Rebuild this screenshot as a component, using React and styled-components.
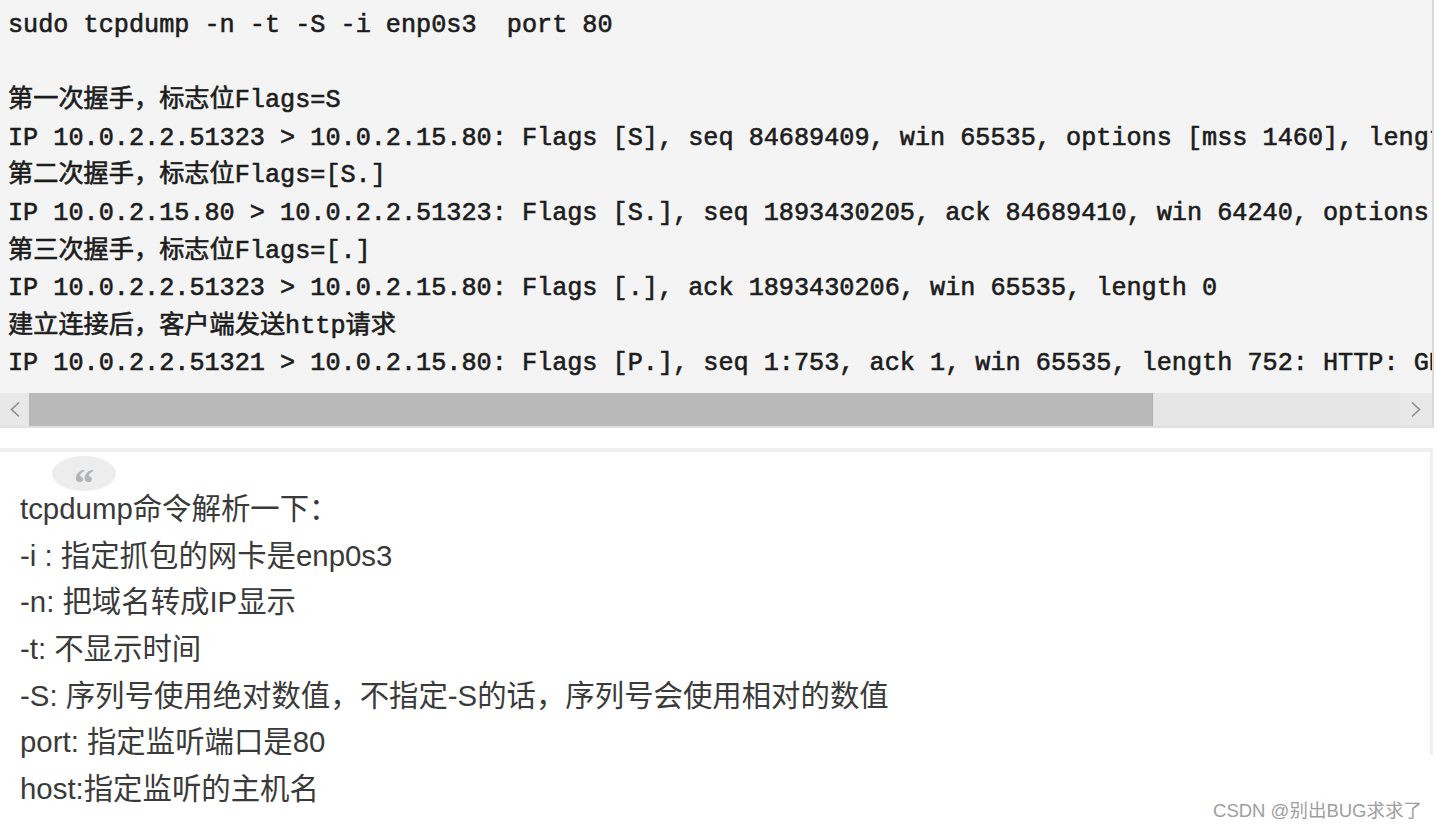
import React from "react";
import styled, { createGlobalStyle } from "styled-components";

const codeLines = [
  "sudo tcpdump -n -t -S -i enp0s3  port 80",
  "",
  "第一次握手，标志位Flags=S",
  "IP 10.0.2.2.51323 > 10.0.2.15.80: Flags [S], seq 84689409, win 65535, options [mss 1460], length 0",
  "第二次握手，标志位Flags=[S.]",
  "IP 10.0.2.15.80 > 10.0.2.2.51323: Flags [S.], seq 1893430205, ack 84689410, win 64240, options [mss 1460], length 0",
  "第三次握手，标志位Flags=[.]",
  "IP 10.0.2.2.51323 > 10.0.2.15.80: Flags [.], ack 1893430206, win 65535, length 0",
  "建立连接后，客户端发送http请求",
  "IP 10.0.2.2.51321 > 10.0.2.15.80: Flags [P.], seq 1:753, ack 1, win 65535, length 752: HTTP: GET / HTTP/1.1",
];

const notes = [
  "tcpdump命令解析一下：",
  "-i : 指定抓包的网卡是enp0s3",
  "-n: 把域名转成IP显示",
  "-t: 不显示时间",
  "-S: 序列号使用绝对数值，不指定-S的话，序列号会使用相对的数值",
  "port: 指定监听端口是80",
  "host:指定监听的主机名",
];

function Chevron({ left }) {
  return (
    <svg width="12" height="17" viewBox="0 0 12 17">
      <path
        d={left ? "M10 1.5 L2.5 8.5 L10 15.5" : "M2 1.5 L9.5 8.5 L2 15.5"}
        fill="none"
        stroke="#8c8c8c"
        strokeWidth="1.6"
      />
    </svg>
  );
}

export default function App() {
  return (
    <Page>
      <GlobalStyle />
      <CodeBlock>
        <CodeText>
          {codeLines.map((line, i) => (
            <div key={i}>{line || " "}</div>
          ))}
        </CodeText>
        <ScrollBar>
          <ScrollButton>
            <Chevron left />
          </ScrollButton>
          <ScrollThumb />
          <ScrollTrack />
          <ScrollButton $wide>
            <Chevron />
          </ScrollButton>
        </ScrollBar>
      </CodeBlock>

      <Quote>
        <QuoteBubble>
          <QuoteMark>“</QuoteMark>
        </QuoteBubble>
        {notes.map((n) => (
          <QuoteLine key={n}>{n}</QuoteLine>
        ))}
      </Quote>

      <Watermark>CSDN @别出BUG求求了</Watermark>
    </Page>
  );
}

const GlobalStyle = createGlobalStyle`
  body {
    margin: 0;
    background: #ffffff;
  }
`;

const Page = styled.div`
  position: relative;
  width: 1437px;
  height: 830px;
  overflow: hidden;
  background: #ffffff;
`;

const CodeBlock = styled.div`
  width: 1432px;
  background: #f4f4f4;
  border-right: 2px solid #dadada;
  border-bottom: 2px solid #e0e0e0;
`;

const CodeText = styled.pre`
  margin: 0;
  padding: 7px 0 10px 8px;
  overflow: hidden;
  white-space: pre;
  font-family: "Liberation Mono", "Noto Sans CJK SC", monospace;
  font-weight: 400;
  font-size: 25.2px;
  line-height: 37.6px;
  color: #1c1c1c;
  -webkit-text-stroke: 0.6px #1c1c1c;
`;

const ScrollBar = styled.div`
  display: flex;
  height: 33px;
  background: #e6e6e6;
`;

const ScrollButton = styled.div`
  width: ${(p) => (p.$wide ? "32px" : "29px")};
  display: flex;
  align-items: center;
  justify-content: center;
  background: #e8e8e8;
`;

const ScrollThumb = styled.div`
  width: 1124px;
  background: #b9b9b9;
  border-right: 1px solid #aeaeae;
  box-sizing: border-box;
`;

const ScrollTrack = styled.div`
  flex: 1;
  background: #e6e6e6;
`;

const Quote = styled.div`
  position: relative;
  width: 1433px;
  margin-top: 20px;
  border-top: 4px solid #efefef;
  padding: 34px 0 0 20px;
  box-sizing: border-box;
  font-family: "Liberation Sans", "Noto Sans CJK SC", sans-serif;
  font-size: 29.4px;
  line-height: 46.67px;
  color: #3a3a3a;

  &::after {
    content: "";
    position: absolute;
    top: 0;
    right: 0;
    width: 3px;
    height: 303px;
    background: #efefef;
  }
`;

const QuoteBubble = styled.div`
  position: absolute;
  left: 52px;
  top: 4px;
  width: 64px;
  height: 35px;
  border-radius: 50%;
  background: #ededed;
  display: flex;
  justify-content: center;
  align-items: flex-start;
  padding-top: 6px;
  box-sizing: border-box;
`;

const QuoteMark = styled.span`
  font-family: "Liberation Serif", serif;
  font-weight: 700;
  font-size: 40px;
  line-height: 44px;
  color: #b3b3b3;
`;

const QuoteLine = styled.div`
  white-space: nowrap;
`;

const Watermark = styled.div`
  position: absolute;
  right: 15px;
  bottom: 9px;
  font-family: "Liberation Sans", "Noto Sans CJK SC", sans-serif;
  font-size: 18.5px;
  line-height: 20px;
  color: #9e9e9e;
  text-shadow: 0 0 1px #ffffff;
`;
